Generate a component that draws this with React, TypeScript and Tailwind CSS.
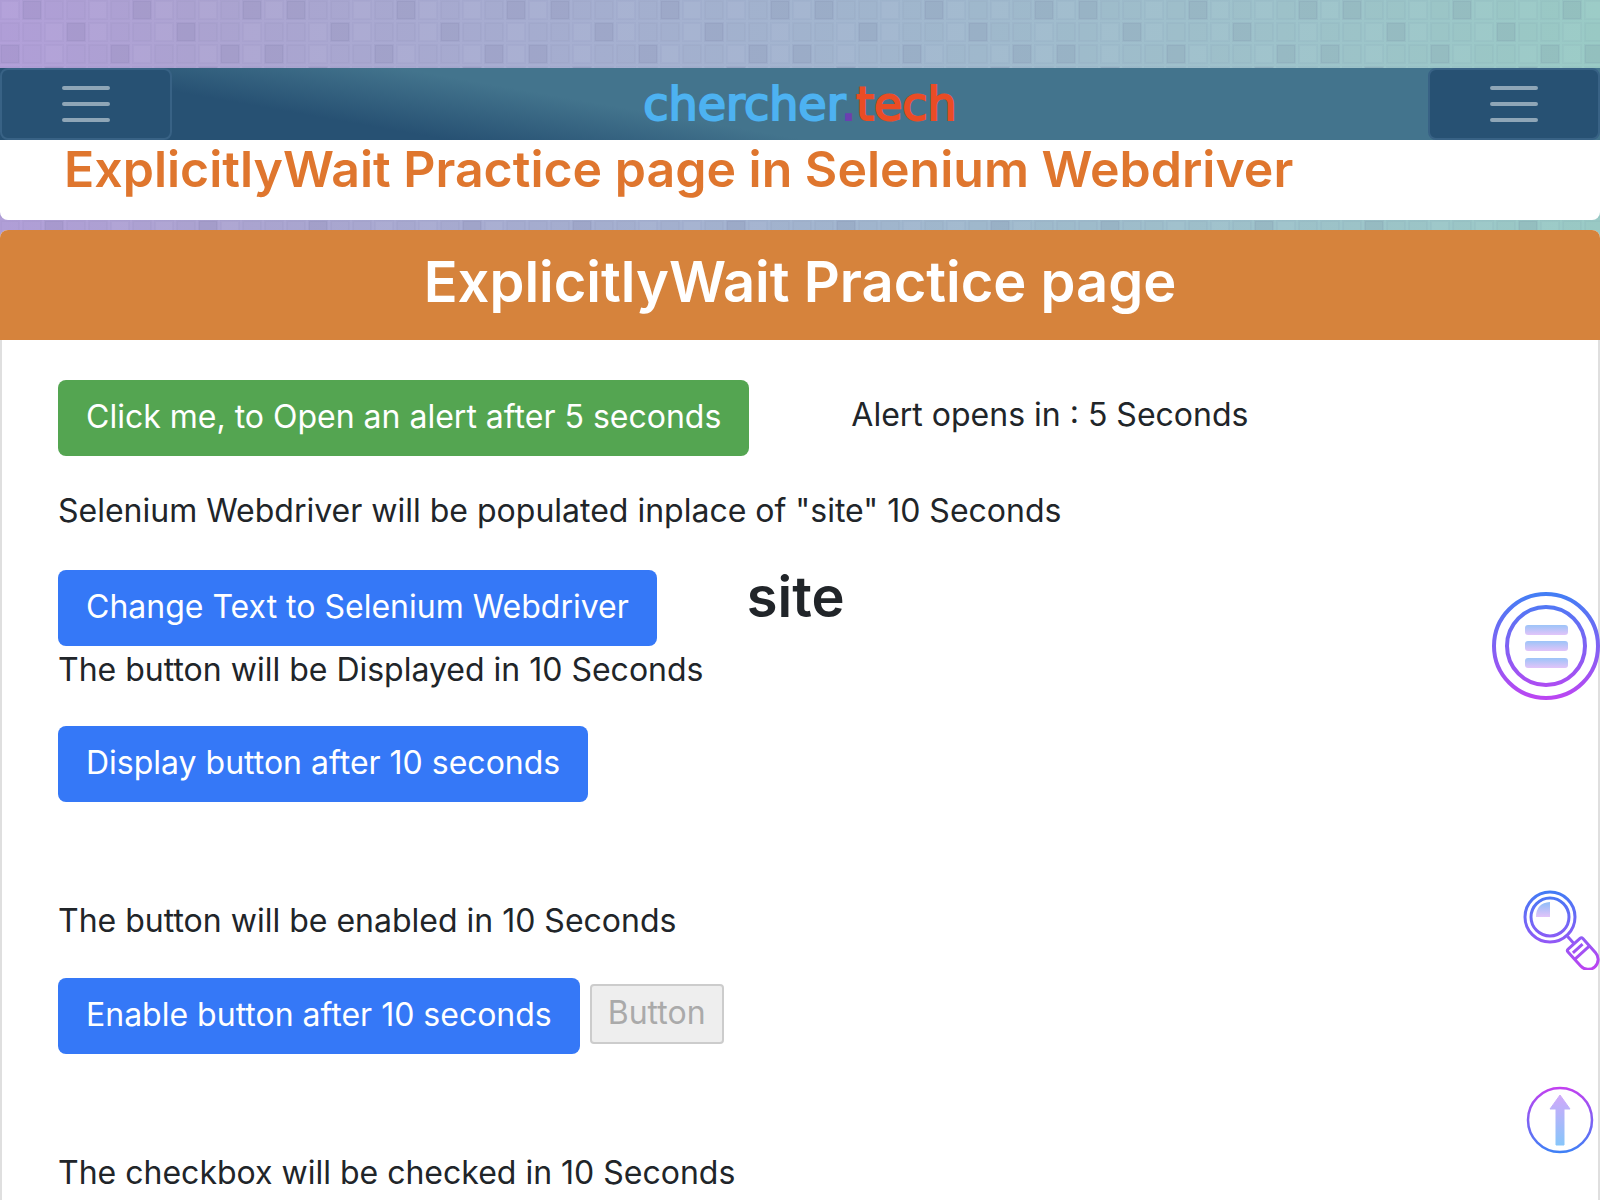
import React from "react";

const PITCH = 22;
const DARK_TILES: Record<number, number[]> = {
  0: [1, 6, 11],
  1: [3, 8],
  2: [0, 5, 10],
  3: [2, 9],
  4: [1, 6],
  5: [4, 11],
  6: [3, 8],
  7: [0, 5, 10],
  8: [2, 7],
  9: [4, 11],
  10: [2, 9],
  11: [1, 6],
};
const LIGHT_TILES = [0, 4, 7, 9];

function MosaicBackground() {
  const tiles: React.ReactNode[] = [];
  for (let row = 0; row < 12; row++) {
    for (let col = 0; col < 12; col++) {
      const dark = DARK_TILES[row].includes(col);
      const light = LIGHT_TILES.includes((col + row * 5) % 12);
      tiles.push(
        <rect
          key={`${row}-${col}`}
          x={col * PITCH + 1}
          y={row * PITCH + 1}
          width={18}
          height={18}
          fill={light && !dark ? "#ffffff" : "#404060"}
          fillOpacity={dark ? 0.08 : light ? 0.02 : 0.015}
          stroke="#404070"
          strokeOpacity={dark ? 0.06 : 0.035}
          strokeWidth={2}
        />,
      );
    }
  }
  return (
    <svg aria-hidden="true" className="absolute inset-0 -z-10 h-full w-full">
      <defs>
        <linearGradient id="sky" x1="0" y1="0" x2="1" y2="0">
          <stop offset="0" stopColor="#b2a0d9" />
          <stop offset="0.12" stopColor="#ada4d2" />
          <stop offset="0.33" stopColor="#a7aed1" />
          <stop offset="0.55" stopColor="#a2b7cf" />
          <stop offset="0.8" stopColor="#9ec3cb" />
          <stop offset="1" stopColor="#9acbc6" />
        </linearGradient>
        <pattern id="mosaic" width={264} height={264} patternUnits="userSpaceOnUse">
          {tiles}
        </pattern>
      </defs>
      <rect width="100%" height="100%" fill="url(#sky)" />
      <rect width="100%" height="100%" fill="url(#mosaic)" />
    </svg>
  );
}

function NavToggle({ label }: { label: string }) {
  return (
    <button
      type="button"
      aria-label={label}
      className="flex h-[72px] w-[172px] items-center justify-center rounded-lg border-2 border-[#386285] bg-[#275173]"
    >
      <svg width="60" height="60" viewBox="0 0 30 30" fill="none" stroke="#8fa6b7" strokeWidth="2" strokeLinecap="round">
        <path d="M4 7h22M4 15h22M4 23h22" />
      </svg>
    </button>
  );
}

function MenuIcon() {
  return (
    <svg width="110" height="110" viewBox="0 0 110 110" fill="none">
      <defs>
        <linearGradient id="menuRing" x1="0" y1="0" x2="0" y2="110" gradientUnits="userSpaceOnUse">
          <stop stopColor="#3f80f5" />
          <stop offset="1" stopColor="#bd45f2" />
        </linearGradient>
        <linearGradient id="menuBar" x1="0" y1="0" x2="0" y2="1">
          <stop stopColor="#9cc4f8" />
          <stop offset="1" stopColor="#e2c4f9" />
        </linearGradient>
      </defs>
      <circle cx="56" cy="56" r="52" stroke="url(#menuRing)" strokeWidth="4" />
      <circle cx="56" cy="56" r="39" stroke="url(#menuRing)" strokeWidth="4" />
      <rect x="35" y="35" width="43" height="10" rx="3" fill="url(#menuBar)" />
      <rect x="35" y="51" width="43" height="10" rx="3" fill="url(#menuBar)" />
      <rect x="35" y="68" width="43" height="10" rx="3" fill="url(#menuBar)" />
    </svg>
  );
}

function SearchIcon() {
  return (
    <svg width="80" height="80" viewBox="0 0 80 80" fill="none">
      <defs>
        <linearGradient id="lens" x1="0" y1="0" x2="0" y2="80" gradientUnits="userSpaceOnUse">
          <stop stopColor="#3f7cf5" />
          <stop offset="0.6" stopColor="#8a5cf6" />
          <stop offset="1" stopColor="#c43ff0" />
        </linearGradient>
        <linearGradient id="handle" x1="36" y1="-10" x2="66" y2="10" gradientUnits="userSpaceOnUse">
          <stop stopColor="#8f5cf6" />
          <stop offset="1" stopColor="#c040f0" />
        </linearGradient>
        <linearGradient id="glint" x1="0" y1="0" x2="0" y2="1">
          <stop stopColor="#8fbdf8" />
          <stop offset="1" stopColor="#e2c4f9" />
        </linearGradient>
      </defs>
      <g stroke="url(#lens)" strokeWidth="3">
        <circle cx="30" cy="27" r="25" />
        <circle cx="30" cy="27" r="19" />
      </g>
      <g transform="translate(30 27) rotate(48)" stroke="url(#handle)" strokeWidth="3" strokeLinejoin="round">
        <path d="M26 0h10" />
        <path d="M38 -10H57a10 10 0 0 1 0 20H38q-2 0 -2 -2V-8q0 -2 2 -2z" />
        <path d="M42 -6V7M48 -10V10" />
      </g>
      <path d="M30 12v15H16q0 -14 14 -15z" fill="url(#glint)" />
    </svg>
  );
}

function ArrowUpIcon() {
  return (
    <svg width="68" height="68" viewBox="0 0 68 68" fill="none">
      <defs>
        <linearGradient id="topRing" x1="0" y1="0" x2="0" y2="68" gradientUnits="userSpaceOnUse">
          <stop stopColor="#c53ff0" />
          <stop offset="1" stopColor="#3b82f6" />
        </linearGradient>
        <linearGradient id="topArrow" x1="0" y1="8" x2="0" y2="60" gradientUnits="userSpaceOnUse">
          <stop stopColor="#d2a8fa" />
          <stop offset="1" stopColor="#86c6fa" />
        </linearGradient>
      </defs>
      <circle cx="34" cy="34" r="32" stroke="url(#topRing)" strokeWidth="2.5" />
      <path d="M34 9l10 14h-6v36h-8V23h-6z" fill="url(#topArrow)" stroke="url(#topArrow)" strokeLinejoin="round" />
    </svg>
  );
}

const actionButton = "h-[76px] rounded-lg px-7 pb-0.5 text-white";
const primaryButton = `${actionButton} bg-[#3578f7]`;

export default function App() {
  return (
    <div className="relative isolate min-h-screen pt-[68px] font-['Inter',sans-serif] text-[32px] leading-[48px] text-[#212529]">
      <MosaicBackground />

      <nav className="flex items-center justify-between bg-[linear-gradient(10deg,#275173_78px,#43748d_140px)]">
        <NavToggle label="Open course menu" />
        <a
          href="#"
          className="font-['DejaVu_Sans',sans-serif] text-[46px] leading-[48px] text-[#4db2f1] [-webkit-text-stroke:2px_currentColor]"
        >
          chercher<span className="text-[#6c3fb0]">.</span>
          <span className="text-[#ea4c25]">tech</span>
        </a>
        <NavToggle label="Open site menu" />
      </nav>

      <header className="mb-[10px] h-20 rounded-b-lg bg-white px-16">
        <h1 className="text-[50px] font-semibold leading-[58px] text-[#df762e]">
          ExplicitlyWait Practice page in Selenium Webdriver
        </h1>
      </header>

      <main className="overflow-hidden rounded-t-lg bg-white">
        <h2 className="h-[110px] bg-[#d6833c] pt-5 text-center text-[56px] font-semibold leading-[64px] text-white">
          ExplicitlyWait Practice page
        </h2>

        <div className="flex min-h-[860px] flex-col items-start border-x-2 border-[#dfdfdf] px-14 pt-10">
          <div className="flex items-start gap-[102px]">
            <button type="button" className={`${actionButton} bg-[#54a551]`}>
              Click me, to Open an alert after 5 seconds
            </button>
            <p className="pt-[11px]">Alert opens in : 5 Seconds</p>
          </div>

          <p className="mt-[31px]">Selenium Webdriver will be populated inplace of "site" 10 Seconds</p>

          <div className="mt-[35px] flex items-start gap-[90px]">
            <button type="button" className={primaryButton}>
              Change Text to Selenium Webdriver
            </button>
            <h2 className="text-[56px] font-semibold leading-[54px]">site</h2>
          </div>
          <p>The button will be Displayed in 10 Seconds</p>

          <button type="button" className={`mt-8 ${primaryButton}`}>
            Display button after 10 seconds
          </button>

          <p className="mt-[95px]">The button will be enabled in 10 Seconds</p>

          <div className="mt-[33px] flex items-start gap-[10px]">
            <button type="button" className={primaryButton}>
              Enable button after 10 seconds
            </button>
            <button
              type="button"
              disabled
              className="mt-1.5 h-[60px] rounded border-2 border-[#cccccc] bg-[#eeeeee] px-4 pb-0.5 leading-[48px] text-[#aaaaaa]"
            >
              Button
            </button>
          </div>

          <p className="mt-[95px]">The checkbox will be checked in 10 Seconds</p>
        </div>
      </main>

      <button type="button" aria-label="Table of contents" className="fixed top-[590px] right-0">
        <MenuIcon />
      </button>
      <button type="button" aria-label="Search" className="fixed top-[890px] right-0">
        <SearchIcon />
      </button>
      <button type="button" aria-label="Back to top" className="fixed top-[1086px] right-1.5">
        <ArrowUpIcon />
      </button>
    </div>
  );
}
